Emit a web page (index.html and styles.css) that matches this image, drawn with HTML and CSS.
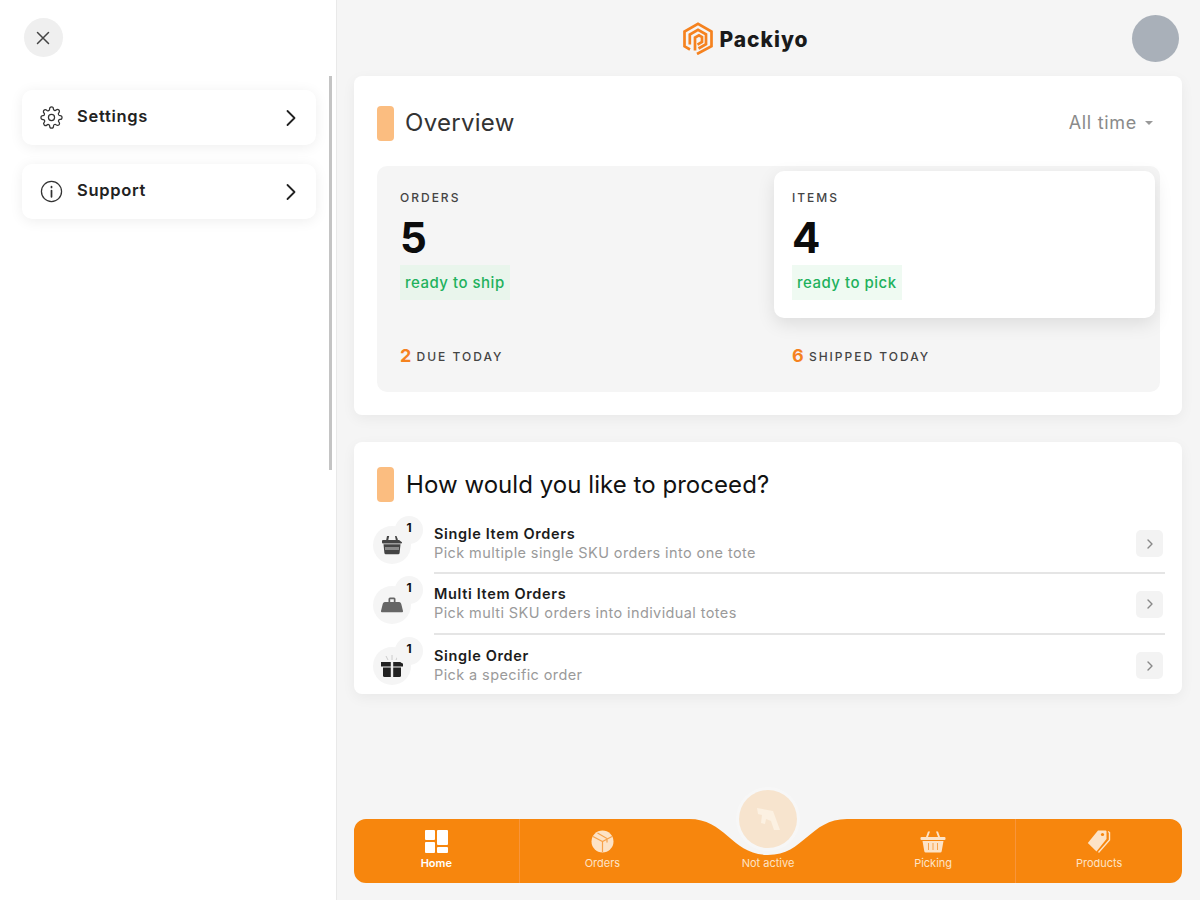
FILE: index.html
```html
<!DOCTYPE html>
<html lang="en">
<head>
  <meta charset="UTF-8" />
  <meta name="viewport" content="width=device-width, initial-scale=1.0" />
  <title>Packiyo</title>
  <link rel="stylesheet" href="styles.css">
</head>
<body>
  <div class="app">
    <aside class="sidebar">
      <button class="close-btn" aria-label="Close">
        <svg width="16" height="16" viewBox="0 0 16 16" fill="none" stroke="#444" stroke-width="1.5" stroke-linecap="round"><path d="M2.5 2.5l11 11M13.5 2.5l-11 11"/></svg>
      </button>
      <nav class="side-menu">
        <a class="side-item">
          <svg class="side-icon" viewBox="0 0 24 24" fill="none" stroke="#333" stroke-width="1.3" stroke-linejoin="round"><circle cx="12" cy="12" r="3.2"/><path d="M19.4 15a1.65 1.65 0 0 0 .33 1.82l.06.06a2 2 0 1 1-2.83 2.83l-.06-.06a1.65 1.65 0 0 0-2.8 1.17V21a2 2 0 0 1-4 0v-.09a1.65 1.65 0 0 0-2.8-1.12l-.06.06a2 2 0 1 1-2.83-2.83l.06-.06a1.65 1.65 0 0 0-1.17-2.8H3a2 2 0 0 1 0-4h.09a1.65 1.65 0 0 0 1.12-2.8l-.06-.06a2 2 0 1 1 2.83-2.83l.06.06a1.65 1.65 0 0 0 1.82.33H9a1.65 1.65 0 0 0 1-1.51V3a2 2 0 0 1 4 0v.09a1.65 1.65 0 0 0 2.8 1.12l.06-.06a2 2 0 1 1 2.83 2.83l-.06.06a1.65 1.65 0 0 0-.33 1.82V9a1.65 1.65 0 0 0 1.51 1H21a2 2 0 0 1 0 4h-.09a1.65 1.65 0 0 0-1.51 1z"/></svg>
          <span class="side-label">Settings</span>
          <svg class="side-chevron" viewBox="0 0 12 18" fill="none" stroke="#222" stroke-width="1.8" stroke-linecap="round" stroke-linejoin="round"><path d="M2.5 2l7 7-7 7"/></svg>
        </a>
        <a class="side-item">
          <svg class="side-icon" viewBox="0 0 24 24" fill="none" stroke="#333" stroke-width="1.3" stroke-linecap="round"><circle cx="12" cy="12" r="10.5"/><path d="M12 11v6.5M12 6.8v1" stroke-width="1.8"/></svg>
          <span class="side-label">Support</span>
          <svg class="side-chevron" viewBox="0 0 12 18" fill="none" stroke="#222" stroke-width="1.8" stroke-linecap="round" stroke-linejoin="round"><path d="M2.5 2l7 7-7 7"/></svg>
        </a>
      </nav>
      <div class="side-scroll"></div>
    </aside>

    <main class="main">
      <header class="topbar">
        <div class="logo">
          <svg width="30" height="33" viewBox="0 0 30 33" fill="none" stroke="#f5821f" stroke-width="2.7" stroke-linejoin="miter">
            <path d="M7 27.5L1.5 24.3V9.5L15 1.8 28.5 9.5v14.8L14 32"/>
            <path d="M6.8 22.5V12.5L15 7.8l8 4.6v9.8l-7.5 4.3"/>
            <path d="M12 28.5V15.6l4-2.3 3 1.7v5l-4.5 2.6"/>
          </svg>
          <span class="logo-text">Packiyo</span>
        </div>
        <div class="avatar"></div>
      </header>

      <section class="card overview">
        <div class="card-head">
          <span class="accent"></span>
          <h2 class="card-title">Overview</h2>
          <div class="range">All time <span class="caret"></span></div>
        </div>
        <div class="stats">
          <div class="stat-col">
            <div class="stat-box">
              <div class="stat-label">ORDERS</div>
              <div class="stat-num">5</div>
              <span class="pill">ready to ship</span>
            </div>
            <div class="stat-foot"><b>2</b> DUE TODAY</div>
          </div>
          <div class="stat-col">
            <div class="stat-box active">
              <div class="stat-label">ITEMS</div>
              <div class="stat-num">4</div>
              <span class="pill">ready to pick</span>
            </div>
            <div class="stat-foot"><b>6</b> SHIPPED TODAY</div>
          </div>
        </div>
      </section>

      <section class="card proceed">
        <div class="card-head">
          <span class="accent"></span>
          <h2 class="card-title dark">How would you like to proceed?</h2>
        </div>
        <div class="rows">
          <div class="row">
            <div class="row-icon">
              <span class="count">1</span>
              <svg width="22" height="20" viewBox="0 0 22 20" fill="#444"><path d="M6 1h2.2L7 6H5zM14 1h2.2L17 6h-2z"/><rect x="1" y="5" width="20" height="3.4" rx="1"/><path d="M2.5 9.2h17L18.6 18a1.5 1.5 0 0 1-1.5 1.3H4.9A1.5 1.5 0 0 1 3.4 18z"/><rect x="4" y="12" width="14" height="3" fill="#8a8a8a"/></svg>
            </div>
            <div class="row-body">
              <div class="row-text">
                <div class="row-title">Single Item Orders</div>
                <div class="row-sub">Pick multiple single SKU orders into one tote</div>
              </div>
              <span class="row-go"><svg width="8" height="12" viewBox="0 0 8 12" fill="none" stroke="#888" stroke-width="1.4" stroke-linecap="round" stroke-linejoin="round"><path d="M2 2l4 4-4 4"/></svg></span>
            </div>
          </div>
          <div class="row">
            <div class="row-icon">
              <span class="count">1</span>
              <svg width="24" height="18" viewBox="0 0 24 18" fill="#666"><path d="M8.5 6V3A1.5 1.5 0 0 1 10 1.5h4A1.5 1.5 0 0 1 15.5 3v3h-1.7V3.2h-3.6V6z"/><path d="M5 6h14c1.5 0 2 1 2.4 2.5l1.6 6.5a1 1 0 0 1-1 1.2H2a1 1 0 0 1-1-1.2l1.6-6.5C3 7 3.500 6 5 6z"/></svg>
            </div>
            <div class="row-body">
              <div class="row-text">
                <div class="row-title">Multi Item Orders</div>
                <div class="row-sub">Pick multi SKU orders into individual totes</div>
              </div>
              <span class="row-go"><svg width="8" height="12" viewBox="0 0 8 12" fill="none" stroke="#888" stroke-width="1.4" stroke-linecap="round" stroke-linejoin="round"><path d="M2 2l4 4-4 4"/></svg></span>
            </div>
          </div>
          <div class="row">
            <div class="row-icon">
              <span class="count">1</span>
              <svg width="24" height="24" viewBox="0 0 24 24"><path d="M8 6L6 2M12 6V1M16 6l2-4" stroke="#ccc" stroke-width="1" fill="none"/><path d="M1 8h22v4.500H1z" fill="#222"/><path d="M3 13.500h18v8a1.500 1.500 0 0 1-1.500 1.500h-15A1.500 1.500 0 0 1 3 21.500z" fill="#222"/><rect x="10.800" y="8" width="2.400" height="15" fill="#eee"/></svg>
            </div>
            <div class="row-body last">
              <div class="row-text">
                <div class="row-title">Single Order</div>
                <div class="row-sub">Pick a specific order</div>
              </div>
              <span class="row-go"><svg width="8" height="12" viewBox="0 0 8 12" fill="none" stroke="#888" stroke-width="1.4" stroke-linecap="round" stroke-linejoin="round"><path d="M2 2l4 4-4 4"/></svg></span>
            </div>
          </div>
        </div>
      </section>

      <footer class="tabbar">
        <svg class="tab-bg" width="828" height="64" viewBox="0 0 828 64"><path fill="#f7860d" d="M12 0H335C372 0 378 36 414 36C450 36 456 0 493 0H816A12 12 0 0 1 828 12V52A12 12 0 0 1 816 64H12A12 12 0 0 1 0 52V12A12 12 0 0 1 12 0Z"/></svg>
        <div class="scan-btn">
          <svg width="34" height="34" viewBox="0 0 34 34" fill="#fcf1e2"><path d="M6 6l16 3 7 19h-6l-3-9-5-2-1 5-4-1 1-8-4-1z"/></svg>
        </div>
        <a class="tab active">
          <svg width="23" height="23" viewBox="0 0 23 23" fill="#fff"><rect x="0" y="0" width="10" height="10" rx="1"/><rect x="0" y="12" width="10" height="11" rx="1"/><rect x="12" y="0" width="11" height="15" rx="1"/><rect x="12" y="17" width="11" height="6" rx="1"/></svg>
          <span>Home</span>
        </a>
        <a class="tab">
          <svg width="23" height="23" viewBox="0 0 23 23"><circle cx="11.5" cy="11.5" r="11" fill="#fde3c6"/><path d="M2 6.5l9.5 5L21 6.5M11.5 11.5V22M6.5 3l9.5 5.5v4" fill="none" stroke="#f7a24a" stroke-width="1.2"/></svg>
          <span>Orders</span>
        </a>
        <a class="tab">
          <span>Not active</span>
        </a>
        <a class="tab">
          <svg width="26" height="22" viewBox="0 0 26 22" fill="#fde3c6"><path d="M8 0.5h2L8 6H6zM16 0.5h2l2 5.5h-2z"/><rect x="0.5" y="6" width="25" height="3" rx="1"/><path d="M2.5 10h21l-1.8 10.2a1.5 1.5 0 0 1-1.5 1.3H5.8a1.5 1.5 0 0 1-1.5-1.3z"/><path d="M8.5 12v7M13 12v7M17.5 12v7" stroke="#f7a24a" stroke-width="1"/></svg>
          <span>Picking</span>
        </a>
        <a class="tab">
          <svg width="24" height="23" viewBox="0 0 24 23" fill="#fde3c6"><path d="M11 0.5h7.5a1 1 0 0 1 1 1V9L9.5 21.5 0.8 13z"/><circle cx="15.5" cy="4.5" r="1.6" fill="#f7860d"/><path d="M21 1.5l1.5 1V10l-11 12.5" fill="none" stroke="#fde3c6" stroke-width="1.4"/></svg>
          <span>Products</span>
        </a>
      </footer>
    </main>
  </div>
</body>
</html>
```

FILE: styles.css
```css
* {
  box-sizing: border-box;
}

body {
  margin: 0;
  font-family: Inter, "Open Sans", sans-serif;
  background: #f5f5f5;
  color: #111;
}

.app {
  display: flex;
  height: 900px;
  overflow: hidden;
}

/* left drawer */
.sidebar {
  position: relative;
  width: 337px;
  flex-shrink: 0;
  background: white;
  border-right: 1px solid #e9e9e9;
  padding: 18px 20px 0 22px;
}

.close-btn {
  display: flex;
  align-items: center;
  justify-content: center;
  width: 39px;
  height: 39px;
  margin-left: 2px;
  padding: 0 2px 0 0;
  border: none;
  border-radius: 50%;
  background: #efefef;
}

.side-menu {
  display: flex;
  flex-direction: column;
  gap: 19px;
  margin-top: 33px;
}

.side-item {
  display: flex;
  align-items: center;
  height: 55px;
  padding: 0 19px 0 18px;
  background: white;
  border-radius: 10px;
  box-shadow: 0 2px 14px rgba(0, 0, 0, 0.07);
}

.side-icon {
  width: 23px;
  height: 23px;
  margin-right: 14px;
}

.side-label {
  flex: 1;
  font-size: 16.5px;
  font-weight: 600;
  letter-spacing: 0.7px;
  padding-bottom: 3px;
  color: #222;
}

.side-chevron {
  width: 12px;
  height: 18px;
}

.side-scroll {
  position: absolute;
  left: 329px;
  top: 76px;
  width: 3px;
  height: 394px;
  background: #c4c4c4;
}

/* main column */
.main {
  position: relative;
  flex: 1;
  display: flex;
  flex-direction: column;
  padding: 0 18px 0 17px;
}

.topbar {
  position: relative;
  display: flex;
  align-items: center;
  justify-content: center;
  height: 76px;
  flex-shrink: 0;
}

.logo {
  display: flex;
  align-items: center;
  gap: 6px;
  margin-right: 44px;
}

.logo-text {
  padding-top: 2px;
  font-size: 21px;
  font-weight: 800;
  letter-spacing: 1px;
  color: #1a1a1a;
}

.avatar {
  position: absolute;
  right: 3px;
  top: 15px;
  width: 47px;
  height: 47px;
  border-radius: 50%;
  background: #a9b0b9;
}

.card {
  background: white;
  border-radius: 8px;
  box-shadow: 0 4px 14px rgba(0, 0, 0, 0.05);
}

.overview {
  height: 339px;
  padding: 30px 22px 0 23px;
}

.proceed {
  height: 252px;
  margin-top: 27px;
  padding: 25px 17px 0 23px;
}

.card-head {
  display: flex;
  align-items: center;
}

.accent {
  width: 17px;
  height: 35px;
  border-radius: 4px;
  background: #fbbd80;
  margin-right: 11px;
}

.card-title {
  flex: 1;
  margin: 0;
  padding-bottom: 2px;
  font-size: 24px;
  font-weight: 400;
  letter-spacing: 0.3px;
  color: #333;
}

.card-title.dark {
  padding-bottom: 0;
  margin-left: 1px;
  letter-spacing: 0.05px;
  color: #111;
}

.range {
  display: flex;
  align-items: center;
  gap: 8px;
  font-size: 18px;
  letter-spacing: 0.7px;
  color: #8a8a8a;
  margin-right: 7px;
  padding-bottom: 2px;
}

.caret {
  width: 0;
  height: 0;
  border-left: 4px solid transparent;
  border-right: 4px solid transparent;
  border-top: 4px solid #999;
}

.stats {
  display: grid;
  grid-template-columns: 392px 1fr;
  height: 226px;
  margin-top: 25px;
  background: #f5f5f5;
  border-radius: 10px;
}

.stat-col {
  display: flex;
  flex-direction: column;
  padding: 5px 5px 0 5px;
}

.stat-box {
  height: 147px;
  padding: 20px 18px 0 18px;
  border-radius: 10px;
}

.stat-box.active {
  background: white;
  box-shadow: 0 6px 18px rgba(0, 0, 0, 0.1);
}

.stat-label {
  font-size: 12px;
  font-weight: 500;
  letter-spacing: 2px;
  color: #444;
  line-height: 14px;
}

.stat-num {
  font-size: 42px;
  font-weight: 700;
  line-height: 50px;
  margin-top: 8px;
  color: #0c0c0c;
}

.pill {
  display: inline-block;
  margin-top: 2px;
  padding: 0 5px;
  height: 35px;
  line-height: 35px;
  font-size: 15px;
  font-weight: 500;
  letter-spacing: 0.5px;
  color: #21b15c;
  background: #e9f5ec;
}

.active .pill {
  background: #effaf2;
}

.stat-foot {
  margin-top: 27px;
  padding-left: 18px;
  font-size: 12px;
  font-weight: 500;
  letter-spacing: 2px;
  color: #444;
  line-height: 22px;
}

.stat-foot b {
  font-size: 18px;
  font-weight: 700;
  letter-spacing: 0;
  color: #f5821f;
  vertical-align: -1px;
}

.rows {
  margin-top: 11.5px;
  margin-left: -4px;
}

.row {
  display: flex;
  height: 60.5px;
}

.row-icon {
  position: relative;
  display: flex;
  align-items: center;
  justify-content: center;
  width: 38px;
  height: 38px;
  margin-top: 12px;
  border-radius: 50%;
  background: #f5f5f5;
  flex-shrink: 0;
}

.count {
  position: absolute;
  left: 22px;
  top: -10px;
  width: 28px;
  height: 28px;
  border-radius: 50%;
  background: #f5f5f5;
  text-align: center;
  font-size: 12px;
  font-weight: 700;
  line-height: 24px;
}

.row-body {
  flex: 1;
  display: flex;
  align-items: center;
  justify-content: space-between;
  margin-left: 23px;
  border-bottom: 2px solid #e5e5e5;
}

.row-body.last {
  border-bottom: none;
}

.row-title {
  font-size: 14.5px;
  font-weight: 600;
  letter-spacing: 0.65px;
  line-height: 19px;
  color: #1c1c1c;
}

.row-sub {
  font-size: 14.5px;
  letter-spacing: 0.4px;
  line-height: 19px;
  color: #9a9a9a;
}

.row-go {
  display: flex;
  align-items: center;
  justify-content: center;
  width: 27px;
  height: 27px;
  margin: 2px 2px 0 0;
  border-radius: 5px;
  background: #f3f3f3;
}

/* bottom tab bar */
.tabbar {
  position: absolute;
  left: 17px;
  top: 819px;
  display: grid;
  grid-template-columns: repeat(5, 1fr);
  width: 828px;
  height: 64px;
}

.tab-bg {
  position: absolute;
  left: 0;
  top: 0;
}

.scan-btn {
  position: absolute;
  left: 385px;
  top: -29px;
  display: flex;
  align-items: center;
  justify-content: center;
  width: 58px;
  height: 58px;
  border-radius: 50%;
  background: #f7e4ce;
  box-shadow: 0 0 0 3px rgba(255, 255, 255, 0.25);
}

.tab {
  position: relative;
  display: flex;
  flex-direction: column;
  align-items: center;
  justify-content: flex-end;
  gap: 3px;
  padding-bottom: 13px;
  font-size: 11px;
  color: #fde3c6;
}

.tab.active {
  color: white;
  font-weight: 600;
}

.tab:nth-of-type(1),
.tab:nth-of-type(4) {
  border-right: 1px solid #f8953a;
}
```
